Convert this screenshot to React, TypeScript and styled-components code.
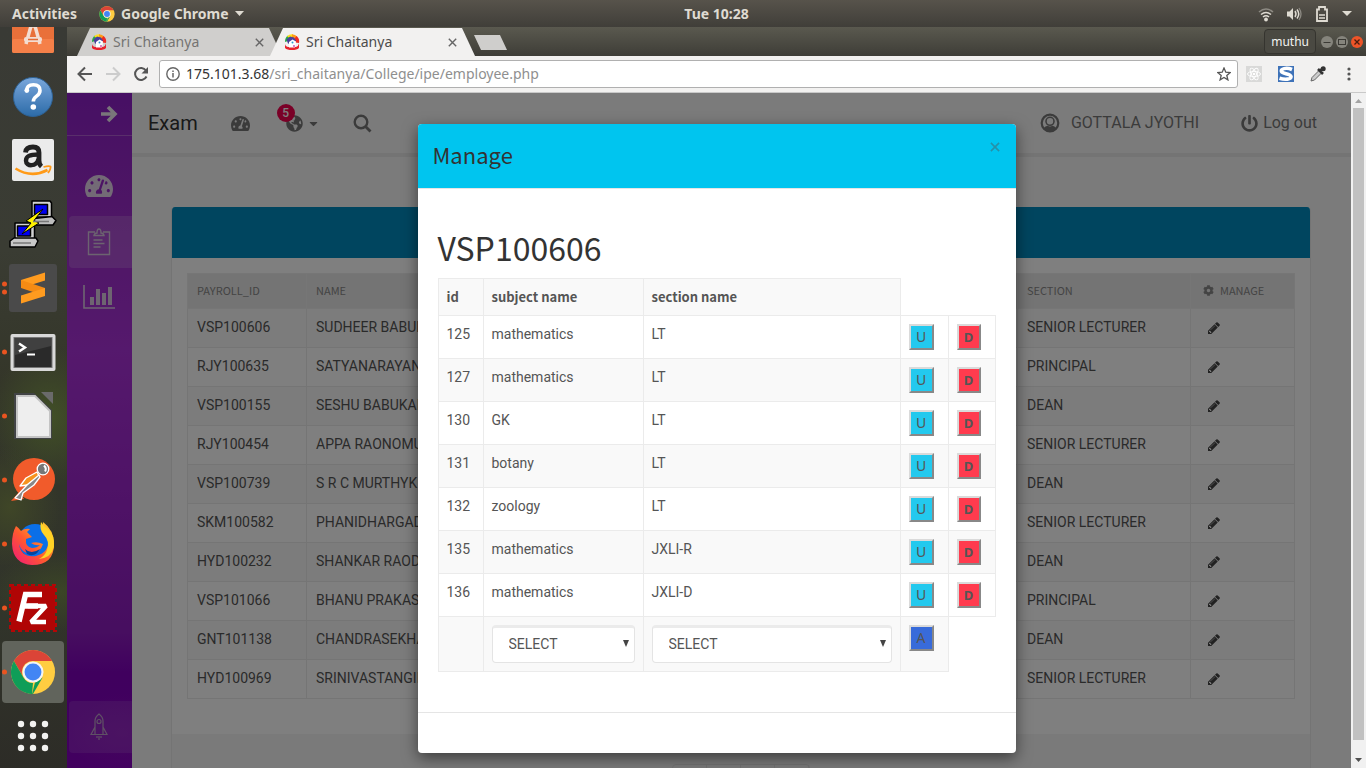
import React from "react";
import styled, { createGlobalStyle, css } from "styled-components";
import {
  FaTachometerAlt,
  FaGlobeAmericas,
  FaCaretDown,
  FaPowerOff,
  FaCog,
} from "react-icons/fa";

const uiFont = `"Noto Sans", "Open Sans", sans-serif`;
const bodyFont = `Roboto, "Liberation Sans", sans-serif`;
const headFont = `"Noto Sans CJK JP", "Noto Sans", sans-serif`;

const GlobalStyle = createGlobalStyle`
  *, *::before, *::after { box-sizing: border-box; }
  body { margin: 0; background: #3a3a36; }
  button, input, select { font: inherit; color: inherit; }
`;

/* ---------- desktop shell ---------- */

const Desktop = styled.div`
  display: flex;
  flex-direction: column;
  height: 100vh;
  overflow: hidden;
  font-family: ${uiFont};
`;

const TopBar = styled.header`
  display: grid;
  grid-template-columns: 67px 1fr auto 1fr;
  align-items: center;
  flex: none;
  height: 27px;
  color: #dfdbd2;
  background: linear-gradient(#57534b, #403e39);
  font-size: 14px;
  font-weight: 700;
  line-height: 20px;
`;

const TopLeft = styled.div`
  grid-column: 1 / 3;
  display: flex;
  align-items: center;
  padding-left: 12px;
  gap: 22px;
`;

const TopRight = styled.div`
  display: flex;
  align-items: center;
  justify-content: flex-end;
  padding-right: 14px;
  gap: 12px;
`;

const BareButton = styled.button`
  display: flex;
  align-items: center;
  gap: 6px;
  padding: 0;
  border: 0;
  background: none;
  color: inherit;
  cursor: pointer;
`;

const Body = styled.div`
  display: flex;
  flex: 1;
  min-height: 0;
`;

const Dock = styled.nav`
  display: flex;
  flex-direction: column;
  justify-content: flex-end;
  flex: none;
  width: 67px;
  overflow: hidden;
  background:
    radial-gradient(60px 70px at 50px 390px, #414f27 0%, transparent 100%),
    radial-gradient(50px 60px at 10px 480px, #3f4627 0%, transparent 100%),
    radial-gradient(70px 40px at 60px 565px, #3b4526 0%, transparent 100%),
    linear-gradient(#393a35 0%, #3a3c33 30%, #343629 48%, #32352a 62%, #31342a 80%, #2d2c27 100%);
`;

const DockItem = styled.button<{ $active?: boolean }>`
  position: relative;
  display: flex;
  align-items: center;
  justify-content: center;
  flex: none;
  width: 62px;
  height: 62px;
  margin: 1px 2px;
  padding: 0;
  border: 0;
  border-radius: 4px;
  background: ${(p) => (p.$active ? "#61645c" : "none")};
  cursor: pointer;
`;

const RunDots = styled.span`
  position: absolute;
  left: 0;
  top: 50%;
  display: flex;
  flex-direction: column;
  gap: 3px;
  transform: translateY(-50%);

  i {
    width: 5px;
    height: 5px;
    border-radius: 50%;
    background: #e95420;
  }
`;

/* ---------- browser window ---------- */

const Browser = styled.div`
  display: flex;
  flex-direction: column;
  flex: 1;
  min-width: 0;
`;

const TabStrip = styled.div`
  display: flex;
  align-items: flex-end;
  flex: none;
  height: 29px;
  padding-left: 10px;
  background: linear-gradient(#5a594f, #3e3d37);
`;

const Tab = styled.div<{ $active?: boolean }>`
  position: relative;
  z-index: ${(p) => (p.$active ? 1 : 0)};
  display: flex;
  align-items: center;
  width: 205px;
  height: 28px;
  margin-right: -12px;
  padding: 0 18px 0 14px;
  gap: 6px;
  clip-path: polygon(13px 0, calc(100% - 13px) 0, 100% 100%, 0 100%);
  color: ${(p) => (p.$active ? "#4c4c4c" : "#757472")};
  background: ${(p) => (p.$active ? "#f2f1f0" : "#d0cfcd")};
  font-size: 14px;
  line-height: 20px;
`;

const TabTitle = styled.span`
  flex: 1;
`;

const NewTab = styled.button`
  width: 33px;
  height: 15px;
  margin: 0 0 6px 11px;
  padding: 0;
  border: 0;
  background: #cfcecc;
  clip-path: polygon(0 0, 26px 0, 100% 100%, 7px 100%);
`;

const WindowControls = styled.div`
  display: flex;
  align-items: center;
  align-self: center;
  gap: 3px;
  margin-left: auto;
  padding-right: 3px;
`;

const ProfileButton = styled.button`
  height: 25px;
  margin-right: 2px;
  padding: 0 6px;
  border: 1px solid #35342f;
  border-radius: 4px;
  background: #4a4942;
  color: #f4f3f0;
  font-size: 12px;
  line-height: 20px;
`;

const Toolbar = styled.div`
  display: flex;
  align-items: center;
  flex: none;
  height: 37px;
  padding: 0 10px;
  border-bottom: 1px solid #c9c9c9;
  background: #f2f1f0;
`;

const NavButtons = styled.div`
  display: flex;
  gap: 12px;
  margin-right: 10px;
`;

const AddressBox = styled.form`
  display: flex;
  align-items: center;
  flex: 1;
  height: 28px;
  padding: 0 6px;
  gap: 6px;
  border: 1px solid #b0b0b0;
  border-radius: 3px;
  background: #fff;
  font-family: ${uiFont};
  font-size: 14px;
  line-height: 20px;
`;

const Url = styled.label`
  flex: 1;
  color: #8f8f8f;
  cursor: text;

  b {
    color: #333;
    font-weight: 400;
  }
`;

const Extensions = styled.div`
  display: flex;
  align-items: center;
  gap: 16px;
  margin-left: 8px;
`;

const Viewport = styled.div`
  position: relative;
  display: flex;
  flex: 1;
  min-height: 0;
  overflow: hidden;
  font-family: ${bodyFont};
`;

/* ---------- page ---------- */

const Sidebar = styled.nav`
  display: flex;
  flex-direction: column;
  flex: none;
  width: 65px;
  padding-bottom: 15px;
  background:
    radial-gradient(60px 40px at 55px 640px, #9a30bb44 0%, transparent 100%),
    linear-gradient(#8e20c8 0%, #9c2cca 18%, #ab32da 38%, #9c24cc 62%, #8e1cc0 80%, #8000bd 86%, #8400bf 100%);
`;

const SideToggle = styled.button`
  display: flex;
  align-items: center;
  justify-content: flex-end;
  height: 43px;
  padding: 0 14px 0 0;
  border: 0;
  border-bottom: 1px solid #b25dd6;
  background: none;
`;

const SideList = styled.div`
  display: flex;
  flex: 1;
  flex-direction: column;
  gap: 4px;
  padding: 24px 0 0 2px;
`;

const SideLink = styled.a<{ $tint?: string; $last?: boolean }>`
  display: flex;
  align-items: center;
  justify-content: center;
  height: 52px;
  padding-right: 4px;
  border-radius: 4px 0 0 4px;
  background: ${(p) => p.$tint || "none"};
  color: #e6d5ec;
  font-size: 28px;
  ${(p) =>
    p.$last &&
    css`
      margin-top: auto;
    `}
`;

const Main = styled.main`
  flex: 1;
  min-width: 0;
  margin-right: 15px;
  background: #f6f6f6;
`;

const PageHeader = styled.header`
  display: flex;
  align-items: center;
  height: 60px;
  padding: 0 34px 0 16px;
  background: #f7f7f7;
  box-shadow: 0 4px 0 #e9e9e9;
`;

const Brand = styled.a`
  margin-right: 33px;
  color: #333;
  font-size: 20px;
  line-height: 24px;
  text-decoration: none;
`;

const HeaderButton = styled.button<{ $gap?: number }>`
  position: relative;
  display: flex;
  align-items: center;
  gap: 4px;
  margin-right: ${(p) => p.$gap ?? 0}px;
  padding: 0;
  border: 0;
  background: none;
  color: #777;
  font-size: 19px;
`;

const Badge = styled.span`
  position: absolute;
  left: -9px;
  top: -11px;
  width: 18px;
  height: 18px;
  border-radius: 9px;
  background: #f5004e;
  color: #fff;
  font-size: 12px;
  font-weight: 500;
  line-height: 18px;
  text-align: center;
`;

const UserLinks = styled.div`
  display: flex;
  gap: 42px;
  margin-left: auto;
`;

const UserLink = styled.a<{ $gap: number }>`
  display: flex;
  align-items: center;
  gap: ${(p) => p.$gap}px;
  color: #777;
  font-size: 16px;
  line-height: 20px;
  text-decoration: none;
`;

const Panel = styled.section`
  margin: 54px 40px 0 39px;
  border: 1px solid #e9e9e9;
  border-top: 0;
  border-radius: 4px;
  background: #fff;
  overflow: hidden;
`;

const PanelHead = styled.div`
  height: 51px;
  background: #008bbf;
`;

const PanelBody = styled.div`
  padding: 15px 15px 35px;
`;

const PanelFoot = styled.div`
  display: flex;
  justify-content: center;
  padding: 30px;
  background: #f5f5f5;
`;

const Pager = styled.div`
  display: flex;
  border: 1px solid #e4e4e4;
  border-radius: 4px;
`;

const PageButton = styled.button`
  width: 34px;
  height: 34px;
  padding: 0;
  border: 0;
  border-right: 1px solid #e4e4e4;
  background: none;
`;

const StaffTable = styled.table`
  width: 100%;
  table-layout: fixed;
  border-collapse: collapse;
  font-size: 14px;
  line-height: 20px;
  color: #555;

  th,
  td {
    padding: 8px 9px 10px;
    border: 1px solid #ebebeb;
    text-align: left;
    white-space: nowrap;
    overflow: hidden;
  }

  th {
    padding: 6px 9px 8px;
    border-color: #ededed;
    background: #e9e9e9;
    color: #888;
    font-family: ${headFont};
    font-size: 11px;
    font-weight: 400;
  }

  tbody tr:nth-child(odd) {
    background: #f9f9f9;
  }
`;

const CogLabel = styled.span`
  display: flex;
  align-items: center;
  gap: 6px;
  padding-left: 3px;
`;

const EditButton = styled.button`
  display: flex;
  align-items: flex-end;
  height: 16px;
  margin-left: 8px;
  padding: 0;
  border: 0;
  background: none;
`;

/* ---------- dialog ---------- */

const Backdrop = styled.div`
  position: absolute;
  inset: 0;
  display: flex;
  align-items: flex-start;
  justify-content: center;
  padding: 31px 15px;
  background: rgba(0, 0, 0, 0.5);
`;

const Dialog = styled.section`
  width: 598px;
  max-width: 100%;
  border-radius: 4px;
  background: #fff;
  box-shadow: 0 5px 15px rgba(0, 0, 0, 0.5);
  overflow: hidden;
  color: #555;
  font-size: 14px;
  line-height: 20px;
`;

const DialogHead = styled.div`
  display: flex;
  align-items: flex-start;
  justify-content: space-between;
  padding: 14px 16px 18px 15px;
  border-bottom: 1px solid #e5e5e5;
  background: #00c5ef;
`;

const DialogTitle = styled.h4`
  margin: 0;
  color: #333;
  font-family: ${headFont};
  font-size: 22px;
  font-weight: 400;
  line-height: 32px;
`;

const CloseButton = styled.button`
  margin-top: 4px;
  padding: 0;
  border: 0;
  background: none;
  line-height: 0;
`;

const DialogBody = styled.div`
  padding: 40px 20px;
`;

const EmployeeCode = styled.h1`
  margin: 0 0 12px;
  color: #333;
  font-family: ${headFont};
  font-size: 32px;
  font-weight: 400;
  line-height: 37px;
`;

const SubjectTable = styled.table`
  width: 100%;
  table-layout: fixed;
  border-collapse: collapse;

  th,
  td {
    padding: 8px;
    border: 1px solid #ebebeb;
    text-align: left;
    vertical-align: top;
  }

  th {
    background: #f9f9f9;
    font-family: ${headFont};
    font-size: 13px;
    font-weight: 700;
  }

  tbody tr:nth-child(even) td {
    background: #f9f9f9;
  }
`;

const actionColors = { update: "#23c9ee", remove: "#ff3b4e", add: "#386bda" };

const ActionButton = styled.button<{ $kind: keyof typeof actionColors }>`
  display: block;
  width: ${(p) => (p.$kind === "remove" ? 24 : 25)}px;
  height: 26px;
  padding: 0;
  border: 2px solid;
  border-color: #dadada #888 #888 #dadada;
  background: ${(p) => actionColors[p.$kind]};
  color: #555;
  font-family: ${uiFont};
  font-size: ${(p) => (p.$kind === "remove" ? 13 : 14)}px;
  font-weight: ${(p) => (p.$kind === "remove" ? 700 : 400)};
  line-height: 20px;
`;

const SelectBox = styled.div`
  position: relative;

  select {
    display: block;
    width: 100%;
    height: 38px;
    padding: 0 16px 2px;
    border: 1px solid #e4e4e4;
    border-top: 3px solid #ebebeb;
    border-radius: 4px;
    background: #fff;
    appearance: none;
  }

  svg {
    position: absolute;
    right: 6px;
    top: 15px;
    pointer-events: none;
  }
`;

const DialogFoot = styled.div`
  height: 41px;
  border-top: 1px solid #e5e5e5;
`;

const Scrollbar = styled.div`
  position: absolute;
  top: 0;
  right: 0;
  bottom: 0;
  display: flex;
  flex-direction: column;
  align-items: center;
  gap: 1px;
  width: 15px;
  padding: 6px 0;
  background: #f1f1f1;
`;

const Thumb = styled.div`
  flex: 1;
  width: 11px;
  margin: 4px 0 17px;
  background: #c1c1c1;
`;

/* ---------- drawings ---------- */

const Svg = ({ s, box, children }: { s: number; box?: string; children: React.ReactNode }) => (
  <svg width={s} height={s} viewBox={box || `0 0 ${s} ${s}`} fill="none" aria-hidden="true">
    {children}
  </svg>
);

const ChromeLogo = ({ s }: { s: number }) => (
  <Svg s={s} box="0 0 48 48">
    <circle cx="24" cy="24" r="23" fill="#ffcd41" />
    <path d="M4.1 12.5A23 23 0 0 1 43.9 12.5H24A11.5 11.5 0 0 0 14 29.8Z" fill="#db4437" />
    <path d="M4.1 12.5 14 29.7A11.5 11.5 0 0 0 24 35.5L23 47A23 23 0 0 1 4.1 12.5Z" fill="#0f9d58" />
    <path d="M34 29.7 24 47H23L26 35.3Z" fill="#0f9d58" />
    <circle cx="24" cy="24" r="11" fill="#f4f4f4" />
    <circle cx="24" cy="24" r="8.8" fill="#4285f4" />
  </Svg>
);

const Favicon = () => (
  <Svg s={16}>
    <path d="M1 8A7 7.500 0 0 1 4 1.500L7 6Z" fill="#27a84b" />
    <path d="M3 2.300A7 7 0 0 1 9 .3L8 6Z" fill="#ffe01a" />
    <path d="M8 .3A7 7 0 0 1 13.500 3L8 7Z" fill="#ff9a17" />
    <path d="M12.500 2A7 7 0 0 1 15 9L8 8Z" fill="#ee2a24" />
    <path d="M2.500 5.500 6 2.500l4 1 2 3-3 4-5-1Z" fill="#4a3f9a" />
    <path d="M5 8 8.500 5.500 12 7.500l-.5 4.500L8 14l-3-2Z" fill="#fff" />
    <circle cx="8.500" cy="8.500" r="1" fill="#2c9ad0" />
    <path d="M1 9.500q0 2.500 3 3.500l8 0q2.500-1 3-3.500v4.500q-2 2-7 2t-7-2Z" fill="#e8222c" />
    <path d="M5 11.500h6v2H5Z" fill="#fff" />
    <circle cx="10" cy="12" r=".9" fill="#c04ab0" />
  </Svg>
);

const CloseX = ({ s = 9, color = "#666" }: { s?: number; color?: string }) => (
  <Svg s={s} box="0 0 9 9">
    <path d="M.8.8 8.200 8.200M8.200.8.8 8.200" stroke={color} strokeWidth="1.400" />
  </Svg>
);

const Triangle = ({ w, h, color, up }: { w: number; h: number; color: string; up?: boolean }) => (
  <svg width={w} height={h} viewBox="0 0 10 10" preserveAspectRatio="none" aria-hidden="true">
    <path d={up ? "M0 10 5 0l5 10Z" : "M0 0h10L5 10Z"} fill={color} />
  </svg>
);

const PencilIcon = () => (
  <svg width="12" height="14" viewBox="0 0 1536 1792" aria-hidden="true">
    <path
      fill="#444"
      d="M363 1536l91-91-235-235-91 91v107h128v128h107zM886 608q0-22-22-22-10 0-17 7l-542 542q-7 7-7 17 0 22 22 22 10 0 17-7l542-542q7-7 7-17zM832 416l416 416-832 832h-416v-416zM1515 512q0 53-37 90l-166 166-416-416 166-165q36-38 90-38 53 0 91 38l235 234q37 39 37 91z"
    />
  </svg>
);

const UserIcon = () => (
  <Svg s={20}>
    <circle cx="10" cy="10" r="8.300" stroke="#777" strokeWidth="2.200" />
    <path d="M3.500 15.500q2-2.700 4-2.700 2.500 1.200 5 0 2 0 4 2.700-2.500 3-6.500 3t-6.500-3Z" fill="#777" />
    <circle cx="10" cy="8.300" r="4" stroke="#777" strokeWidth="1.600" />
  </Svg>
);

const ArrowIcon = () => (
  <Svg s={18}>
    <path d="M1 9h13M8 2l7 7-7 7" stroke="#f3ecf5" strokeWidth="3.600" />
  </Svg>
);

const SoftwareIcon = () => (
  <Svg s={42}>
    <rect width="42" height="42" rx="2" fill="#e9703a" />
    <rect y="28" width="42" height="14" rx="2" fill="#f58049" />
    <path d="M14 33 19 15h4l5 18" stroke="#f3ddd2" strokeWidth="3.500" />
    <rect x="12" y="26" width="18" height="5" rx="2" fill="#f3ddd2" />
    <path d="M16 28.500h10" stroke="#e26b36" strokeWidth="1.500" />
  </Svg>
);

const HelpIcon = () => (
  <Svg s={42}>
    <defs>
      <linearGradient id="help" x1="0" y1="0" x2="0" y2="1">
        <stop stopColor="#7aa7dc" />
        <stop offset="1" stopColor="#2c6ba8" />
      </linearGradient>
    </defs>
    <circle cx="21" cy="22" r="19.500" fill="url(#help)" stroke="#2e6295" />
    <path d="M14.500 16q.2-6.200 7-6.200 6.500 0 6.500 5.700 0 3.200-3.400 5.600-3.300 2.300-3.300 5.400" stroke="#fff" strokeWidth="3.600" />
    <circle cx="14.800" cy="15.500" r="2.400" fill="#fff" />
    <circle cx="21.300" cy="32" r="2.800" fill="#fff" />
  </Svg>
);

const AmazonIcon = () => (
  <Svg s={42}>
    <rect width="42" height="42" rx="2" fill="#ebebeb" />
    <path d="M13.500 13.500q.5-5.500 7.500-5.500 6 0 6 5.500v8q0 4 2.500 6" stroke="#222" strokeWidth="4.800" />
    <path d="M26.500 15.500c-9 0-12.500 1.600-12.500 6.200 0 6 10.500 6.500 12.500-1.700" stroke="#222" strokeWidth="4.400" />
    <path d="M3.500 29.500q16 10 32 1.500" stroke="#ff9a17" strokeWidth="2.600" />
    <path d="M31.500 28q5.500-1.500 7-.5.500 2.500-2.500 6.500" stroke="#ff9a17" strokeWidth="1.800" />
  </Svg>
);

const PuttyIcon = () => (
  <Svg s={48}>
    <g stroke="#000" strokeWidth="1.500" strokeLinejoin="round">
      <path d="M23 1h18l1.500 2v14H23Z" fill="#d2d2d2" />
      <path d="M25.500 4.500h13v10h-13Z" fill="#0000f0" />
      <path d="m21 19 22-2.500 4 4-3 4.500H21Z" fill="#bdbdbd" />
      <path d="M6 23h18l1.500 2v14H6Z" fill="#d2d2d2" />
      <path d="M8.500 26h13v10h-13Z" fill="#0000f0" />
      <path d="m1 41 4-3h22l2 3-3 6H1Z" fill="#c8c8c8" />
      <path d="M34 9 17 21l5 2-9 11 17-11-5-2.500Z" fill="#fff200" strokeWidth="1" />
    </g>
    <path d="M4 43h18M24 21.500h16" stroke="#777" strokeWidth="1.500" />
  </Svg>
);

const SublimeIcon = () => (
  <Svg s={48}>
    <rect width="48" height="48" rx="3" fill="#4a4a4a" />
    <path d="M12 16 36 8.500v8L12 24Z" fill="#ff9b1f" />
    <path d="m12 16 24 8v8l-24-8Z" fill="#f58b14" />
    <path d="m12 31.500 24-7.500v8l-24 7.500Z" fill="#ff9b1f" />
  </Svg>
);

const TerminalIcon = () => (
  <Svg s={46}>
    <rect x=".5" y="5" width="45" height="37" rx="2" fill="#d9d9d9" />
    <rect x="3.500" y="8" width="39" height="31" fill="#777" />
    <rect x="4.500" y="9" width="37" height="29" fill="#2a2a2a" />
    <path d="M5 9h36v8L5 26Z" fill="#404040" />
    <path d="m9 14.500 6 4-6 4" stroke="#fff" strokeWidth="2.400" />
    <path d="M17 25.500h8" stroke="#fff" strokeWidth="2" />
  </Svg>
);

const OfficeIcon = () => (
  <Svg s={48}>
    <path d="M5 1h20l18 17v29H5Z" fill="#414345" />
    <path d="M32 0h12v12Z" fill="#6a6a6a" />
    <path d="M8 4h18l15 15v26H8Z" fill="#eee" stroke="#c4c4c4" strokeWidth="2" />
  </Svg>
);

const PostmanIcon = () => (
  <Svg s={46}>
    <circle cx="24" cy="22" r="21" fill="#f15b2b" />
    <path d="m1 44 8-9 5 7Z" fill="#f15b2b" />
    <g stroke="#fff" strokeWidth="1.300" strokeLinejoin="round">
      <circle cx="33" cy="12" r="5.800" fill="#777" />
      <path d="m27 15-11 6-6 8 7-1 12-9Z" fill="#f7931e" />
      <path d="M29 18 17 28 5 41l6 2 2-7 11-8 6-8Z" fill="#888" />
    </g>
    <path d="M34 8.500q3 3 1 6" stroke="#fff" strokeWidth="2" />
  </Svg>
);

const FirefoxIcon = () => (
  <Svg s={46}>
    <defs>
      <linearGradient id="fox" x1="0" y1="1" x2="1" y2="0">
        <stop stopColor="#f0147e" />
        <stop offset=".45" stopColor="#ff5a2e" />
        <stop offset="1" stopColor="#ffe22e" />
      </linearGradient>
    </defs>
    <circle cx="25" cy="20" r="17" fill="#0a6fe8" />
    <path d="M6 5q3 2 5 5 4-3 9-2l-3 3 5 5-6 2q-1 8 6 9 5 0 8-3-5 1-9-2 6-2 12 1-3 10-13 10-9-2-11-10 2 14 17 12 14-4 12-17-1-6-6-9l1-8q11 8 11 22 0 21-22 21Q3 43 2 23 2 12 6 5Z" fill="url(#fox)" />
    <path d="M31 1q-2 8 3 13 6 6 3 15-2 6-8 9 12-1 15-12 1-12-6-18-5-3-7-7Z" fill="#ffd326" />
    <path d="M15 28q6 6 15 0-5 9-13 5Z" fill="#05459f" />
  </Svg>
);

const FileZillaIcon = () => (
  <Svg s={48}>
    <rect x="2" y="2" width="44" height="44" fill="#b00505" />
    <rect x="1" y="1" width="46" height="46" stroke="#b50606" strokeWidth="2" strokeDasharray="4 3" />
    <path d="M33 10.500H16.500L10 37.500M13 22h16" stroke="#fff" strokeWidth="5.500" />
    <path d="M19 22h18L22 38h15" stroke="#fff" strokeWidth="4.500" strokeLinejoin="bevel" />
  </Svg>
);

const AppsIcon = () => (
  <Svg s={48}>
    {[12, 24, 36].map((y) => [12, 24, 36].map((x) => <circle key={`${x}-${y}`} cx={x} cy={y} r="3.200" fill="#f2f2f0" />))}
  </Svg>
);

const ClipboardIcon = () => (
  <Svg s={28}>
    <path d="M10 4H3.500v22.500h21V4H18M9 7.500h10q-.5-2.500-3-2.500 0-4-2-4t-2 4q-2.500 0-3 2.500Z" stroke="#d8c6e0" strokeWidth="1.400" />
    <path d="M8.500 12h9M8.500 15.500h11M8.500 19h7" stroke="#d8c6e0" strokeWidth="1.400" />
  </Svg>
);

const ChartIcon = () => (
  <Svg s={32}>
    <path d="M1 3v23h31" stroke="#dccbe3" strokeWidth="1.600" />
    <path d="M9 23v-8M15 23V7M21 23V11M27 23V5" stroke="#dccbe3" strokeWidth="4" />
  </Svg>
);

const RocketIcon = () => (
  <Svg s={28}>
    <g stroke="#bfa3ca" strokeWidth="1.200">
      <path d="M10 21V8q0-4 4-7 4 3 4 7v13M10 14l-4 7.500h16L18 14M12 23v2M14 23v4M16 23v2" />
      <circle cx="14" cy="8.500" r="2" />
    </g>
  </Svg>
);

/* ---------- data ---------- */

const dockApps: { name: string; icon: React.ReactNode; dots?: number; active?: boolean }[] = [
  { name: "Ubuntu Software", icon: <SoftwareIcon /> },
  { name: "Help", icon: <HelpIcon /> },
  { name: "Amazon", icon: <AmazonIcon /> },
  { name: "PuTTY", icon: <PuttyIcon /> },
  { name: "Sublime Text", icon: <SublimeIcon />, dots: 2 },
  { name: "Terminal", icon: <TerminalIcon />, dots: 1 },
  { name: "LibreOffice", icon: <OfficeIcon />, dots: 1 },
  { name: "Postman", icon: <PostmanIcon />, dots: 1 },
  { name: "Firefox", icon: <FirefoxIcon />, dots: 1 },
  { name: "FileZilla", icon: <FileZillaIcon />, dots: 1 },
  { name: "Google Chrome", icon: <ChromeLogo s={46} />, dots: 1, active: true },
  { name: "Show Applications", icon: <AppsIcon /> },
];

const staff = [
  ["VSP100606", "SUDHEER BABUK", "SENIOR LECTURER"],
  ["RJY100635", "SATYANARAYANA", "PRINCIPAL"],
  ["VSP100155", "SESHU BABUKAN", "DEAN"],
  ["RJY100454", "APPA RAONOMU", "SENIOR LECTURER"],
  ["VSP100739", "S R C MURTHYK", "DEAN"],
  ["SKM100582", "PHANIDHARGAD", "SENIOR LECTURER"],
  ["HYD100232", "SHANKAR RAOD", "DEAN"],
  ["VSP101066", "BHANU PRAKASH", "PRINCIPAL"],
  ["GNT101138", "CHANDRASEKHA", "DEAN"],
  ["HYD100969", "SRINIVASTANGIR", "SENIOR LECTURER"],
];

const subjects = [
  ["125", "mathematics", "LT"],
  ["127", "mathematics", "LT"],
  ["130", "GK", "LT"],
  ["131", "botany", "LT"],
  ["132", "zoology", "LT"],
  ["135", "mathematics", "JXLI-R"],
  ["136", "mathematics", "JXLI-D"],
];

const Picker = ({ label }: { label: string }) => (
  <SelectBox>
    <select aria-label={label} defaultValue="">
      <option value="">SELECT</option>
    </select>
    <Triangle w={6} h={7} color="#444" />
  </SelectBox>
);

export default function App() {
  return (
    <Desktop>
      <GlobalStyle />
      <TopBar>
        <TopLeft>
          <BareButton>Activities</BareButton>
          <BareButton>
            <ChromeLogo s={16} />
            Google Chrome
            <Triangle w={9} h={5} color="#dfdbd2" />
          </BareButton>
        </TopLeft>
        <BareButton>Tue 10:28</BareButton>
        <TopRight>
          <Svg s={16}>
            <path d="M1 6q7-6 14 0" stroke="#8d8a83" strokeWidth="1.600" />
            <path d="M3 8.500q5-4 10 0M5 11q3-2.500 6 0" stroke="#dfdbd2" strokeWidth="1.600" />
            <circle cx="8" cy="13.500" r="1.900" fill="#dfdbd2" />
          </Svg>
          <Svg s={16}>
            <path d="M1 5.500h2.500L7 2v12L3.500 10.500H1Z" fill="#dfdbd2" />
            <path d="M9 5q2 3 0 6M11 3.500q3.500 4.500 0 9" stroke="#dfdbd2" strokeWidth="1.500" />
            <path d="M13 2q4 6 0 12" stroke="#8d8a83" strokeWidth="1.300" />
          </Svg>
          <Svg s={16}>
            <path d="M3 3.500h2V1h6v2.500h2V15H3Z" stroke="#dfdbd2" strokeWidth="1.800" />
            <path d="M5 9h6M5 12h6" stroke="#dfdbd2" strokeWidth="1.600" />
          </Svg>
          <Triangle w={10} h={5} color="#dfdbd2" />
        </TopRight>
      </TopBar>

      <Body>
        <Dock aria-label="Dock">
          {dockApps.map((app) => (
            <DockItem key={app.name} $active={app.active} aria-label={app.name}>
              {app.dots && (
                <RunDots>
                  {Array.from({ length: app.dots }, (_, i) => (
                    <i key={i} />
                  ))}
                </RunDots>
              )}
              {app.icon}
            </DockItem>
          ))}
        </Dock>

        <Browser>
          <TabStrip>
            {[false, true].map((active) => (
              <Tab key={String(active)} $active={active}>
                <Favicon />
                <TabTitle>Sri Chaitanya</TabTitle>
                <BareButton aria-label="Close tab">
                  <CloseX />
                </BareButton>
              </Tab>
            ))}
            <NewTab aria-label="New tab" />
            <WindowControls>
              <ProfileButton>muthu</ProfileButton>
              <BareButton aria-label="Minimize">
                <Svg s={12}>
                  <circle cx="6" cy="6" r="6" fill="#85847c" />
                  <path d="M2.500 6.500h7" stroke="#3b3a35" />
                </Svg>
              </BareButton>
              <BareButton aria-label="Maximize">
                <Svg s={12}>
                  <circle cx="6" cy="6" r="6" fill="#85847c" />
                  <rect x="2.500" y="3.500" width="7" height="5" stroke="#3b3a35" />
                </Svg>
              </BareButton>
              <BareButton aria-label="Close window">
                <Svg s={12}>
                  <circle cx="6" cy="6" r="6" fill="#ed5428" />
                  <path d="m3.500 3.500 5 5M8.500 3.500l-5 5" stroke="#4b1c0e" strokeWidth="1.300" />
                </Svg>
              </BareButton>
            </WindowControls>
          </TabStrip>

          <Toolbar>
            <NavButtons>
              <BareButton aria-label="Back">
                <Svg s={16}>
                  <path d="M15 8H2.500M8 1.500 1.500 8 8 14.500" stroke="#555" strokeWidth="2" />
                </Svg>
              </BareButton>
              <BareButton aria-label="Forward">
                <Svg s={16}>
                  <path d="M1 8h12.500M8 1.500 14.500 8 8 14.500" stroke="#ccc" strokeWidth="2" />
                </Svg>
              </BareButton>
              <BareButton aria-label="Reload">
                <Svg s={16}>
                  <path d="M13.500 10.500A6 6 0 1 1 13 4.500" stroke="#555" strokeWidth="2" />
                  <path d="M15 1v6.500H8.500Z" fill="#555" />
                </Svg>
              </BareButton>
            </NavButtons>
            <AddressBox>
              <Svg s={14}>
                <circle cx="7" cy="7" r="6.200" stroke="#666" strokeWidth="1.400" />
                <path d="M7 6v4.500M7 3.500v1.500" stroke="#666" strokeWidth="1.500" />
              </Svg>
              <Url>
                <b>175.101.3.68</b>/sri_chaitanya/College/ipe/employee.php
              </Url>
              <Svg s={14}>
                <path d="m7 1 1.800 4.200 4.400.4-3.400 2.900 1.100 4.400L7 10.500l-3.900 2.400 1.100-4.400L.8 5.600l4.400-.4Z" stroke="#555" strokeWidth="1.300" />
              </Svg>
            </AddressBox>
            <Extensions>
              <Svg s={16}>
                <rect width="16" height="16" fill="#d9d9d8" />
                <g stroke="#fff" strokeWidth=".9">
                  <ellipse cx="8" cy="8" rx="6.500" ry="2.600" />
                  <ellipse cx="8" cy="8" rx="6.500" ry="2.600" transform="rotate(60 8 8)" />
                  <ellipse cx="8" cy="8" rx="6.500" ry="2.600" transform="rotate(120 8 8)" />
                </g>
                <circle cx="8" cy="8" r="1.300" fill="#fff" />
              </Svg>
              <Svg s={16}>
                <rect width="16" height="16" fill="#3e72b8" />
                <path d="M14 3.500C8 1 2.500 3 3.500 5.500c1 2.500 9 2 9.500 5 .3 3-6 3.500-11.500 1.700" stroke="#fff" strokeWidth="3.600" />
              </Svg>
              <Svg s={16}>
                <path d="m1 15 1-3.500 7-7L11.500 7l-7 7Z" fill="#ccc" stroke="#666" />
                <path d="m8 3 5 5M9.500 5.500 13 2" stroke="#333" strokeWidth="2.600" />
                <circle cx="13.200" cy="2.800" r="2.500" fill="#333" />
              </Svg>
              <Svg s={14}>
                <circle cx="7" cy="2" r="1.600" fill="#555" />
                <circle cx="7" cy="7" r="1.600" fill="#555" />
                <circle cx="7" cy="12" r="1.600" fill="#555" />
              </Svg>
            </Extensions>
          </Toolbar>

          <Viewport>
            <Sidebar aria-label="Main menu">
              <SideToggle aria-label="Expand menu">
                <ArrowIcon />
              </SideToggle>
              <SideList>
                <SideLink href="#dashboard" aria-label="Dashboard">
                  <FaTachometerAlt />
                </SideLink>
                <SideLink href="#exams" aria-label="Exams" $tint="#ffffff2b">
                  <ClipboardIcon />
                </SideLink>
                <SideLink href="#reports" aria-label="Reports">
                  <ChartIcon />
                </SideLink>
                <SideLink href="#upgrade" aria-label="Upgrade" $tint="#ffffff1c" $last>
                  <RocketIcon />
                </SideLink>
              </SideList>
            </Sidebar>

            <Main>
              <PageHeader>
                <Brand href="#exam">Exam</Brand>
                <HeaderButton $gap={36} aria-label="Dashboard">
                  <FaTachometerAlt />
                </HeaderButton>
                <HeaderButton $gap={33} aria-label="Notifications">
                  <FaGlobeAmericas size={17} />
                  <FaCaretDown size={13} />
                  <Badge>5</Badge>
                </HeaderButton>
                <HeaderButton aria-label="Search">
                  <Svg s={19}>
                    <circle cx="8" cy="8" r="6.300" stroke="#777" strokeWidth="2.400" />
                    <path d="m12.500 12.500 5 5" stroke="#777" strokeWidth="2.800" />
                  </Svg>
                </HeaderButton>
                <UserLinks>
                  <UserLink href="#profile" $gap={11}>
                    <UserIcon />
                    GOTTALA JYOTHI
                  </UserLink>
                  <UserLink href="#logout" $gap={5}>
                    <FaPowerOff size={17} />
                    Log out
                  </UserLink>
                </UserLinks>
              </PageHeader>

              <Panel>
                <PanelHead />
                <PanelBody>
                  <StaffTable>
                    <colgroup>
                      <col style={{ width: 119 }} />
                      <col />
                      <col style={{ width: 173 }} />
                      <col style={{ width: 104 }} />
                    </colgroup>
                    <thead>
                      <tr>
                        <th>PAYROLL_ID</th>
                        <th>NAME</th>
                        <th>SECTION</th>
                        <th>
                          <CogLabel>
                            <FaCog size={11} />
                            MANAGE
                          </CogLabel>
                        </th>
                      </tr>
                    </thead>
                    <tbody>
                      {staff.map(([id, name, section]) => (
                        <tr key={id}>
                          <td>{id}</td>
                          <td>{name}</td>
                          <td>{section}</td>
                          <td>
                            <EditButton aria-label={`Edit ${id}`}>
                              <PencilIcon />
                            </EditButton>
                          </td>
                        </tr>
                      ))}
                    </tbody>
                  </StaffTable>
                </PanelBody>
                <PanelFoot>
                  <Pager>
                    {["First", "Previous", "Next", "Last"].map((name) => (
                      <PageButton key={name} aria-label={`${name} page`} />
                    ))}
                  </Pager>
                </PanelFoot>
              </Panel>
            </Main>

            <Backdrop>
              <Dialog role="dialog" aria-labelledby="manage-title">
                <DialogHead>
                  <DialogTitle id="manage-title">Manage</DialogTitle>
                  <CloseButton aria-label="Close">
                    <CloseX s={10} color="#2591a8" />
                  </CloseButton>
                </DialogHead>
                <DialogBody>
                  <EmployeeCode>VSP100606</EmployeeCode>
                  <SubjectTable>
                    <colgroup>
                      <col style={{ width: 45 }} />
                      <col style={{ width: 160 }} />
                      <col />
                      <col style={{ width: 48 }} />
                      <col style={{ width: 47 }} />
                    </colgroup>
                    <thead>
                      <tr>
                        <th>id</th>
                        <th>subject name</th>
                        <th>section name</th>
                      </tr>
                    </thead>
                    <tbody>
                      {subjects.map(([id, subject, section]) => (
                        <tr key={id}>
                          <td>{id}</td>
                          <td>{subject}</td>
                          <td>{section}</td>
                          <td>
                            <ActionButton $kind="update">U</ActionButton>
                          </td>
                          <td>
                            <ActionButton $kind="remove">D</ActionButton>
                          </td>
                        </tr>
                      ))}
                      <tr>
                        <td />
                        <td>
                          <Picker label="Subject" />
                        </td>
                        <td>
                          <Picker label="Section" />
                        </td>
                        <td>
                          <ActionButton $kind="add">A</ActionButton>
                        </td>
                      </tr>
                    </tbody>
                  </SubjectTable>
                </DialogBody>
                <DialogFoot />
              </Dialog>
            </Backdrop>

            <Scrollbar>
              <Triangle w={7} h={4} color="#a3a3a3" up />
              <Thumb />
              <Triangle w={7} h={4} color="#505050" />
            </Scrollbar>
          </Viewport>
        </Browser>
      </Body>
    </Desktop>
  );
}
